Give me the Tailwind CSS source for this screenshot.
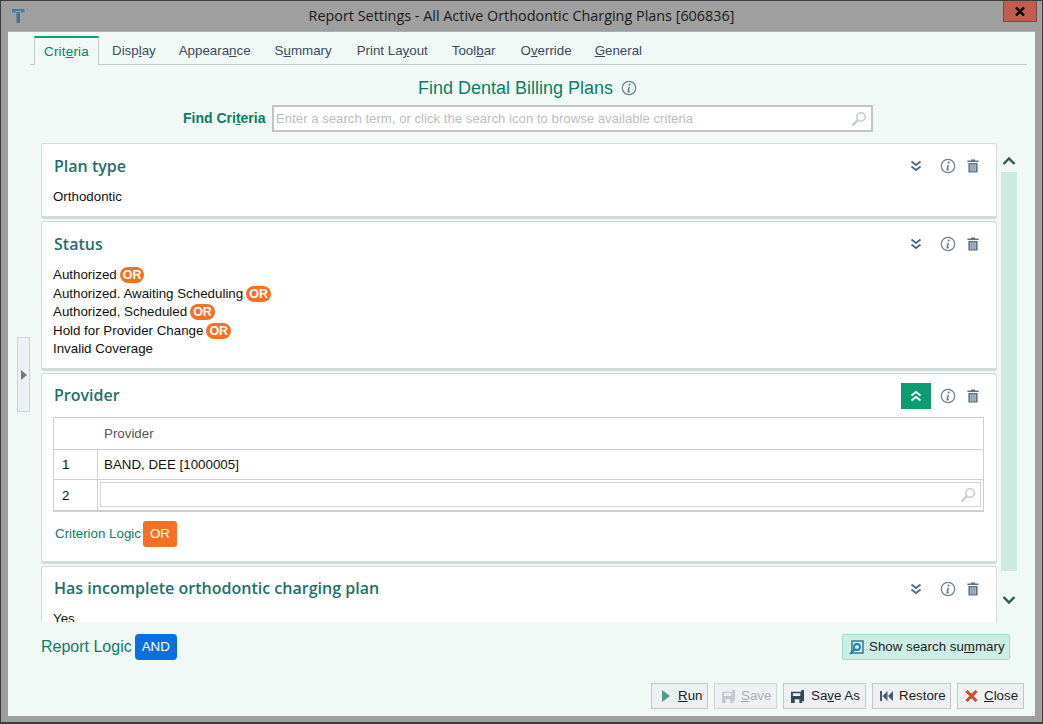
<!DOCTYPE html>
<html lang="en">
<head>
    <meta charset="UTF-8">
    <title>Report Settings</title>
    <script src="https://cdn.jsdelivr.net/npm/@tailwindcss/browser@4"></script>
</head>
<body class="m-0 bg-[#9f9f9f]">
    <svg class="hidden" width="0" height="0">
        <symbol id="chev-down" viewBox="0 0 12 12"><path d="M1.500 1.500 6 5l4.500-3.500M1.500 6.500 6 10l4.500-3.500" fill="none" stroke="#4d6b82" stroke-width="1.800"/></symbol>
        <symbol id="chev-up" viewBox="0 0 12 12"><path d="M1.500 5.500 6 2l4.500 3.500M1.500 10.500 6 7l4.500 3.500" fill="none" stroke="#fff" stroke-width="1.800"/></symbol>
        <symbol id="info" viewBox="0 0 16 16"><circle cx="8" cy="8" r="6.700" fill="none" stroke="#6b8096" stroke-width="1.200"/><circle cx="8.600" cy="4.600" r="1.100" fill="#6b8096"/><path d="M8.200 6.800 7.200 11.600h1.600" fill="none" stroke="#6b8096" stroke-width="1.600"/></symbol>
        <symbol id="trash" viewBox="0 0 12 14"><path d="M4 1.500V.6h4v.9h3.600v1.400H.4V1.500zM1.400 4h9.200v9.600H1.400z" fill="#5f7387"/><path d="M3.900 5.200v7.200M6 5.200v7.200M8.100 5.200v7.200" stroke="#fff" stroke-width=".8"/></symbol>
        <symbol id="search" viewBox="0 0 16 16"><circle cx="10" cy="6" r="4.200" fill="none" stroke="#c6cdd2" stroke-width="1.600"/><path d="M6.800 9.200 1.500 14.500" stroke="#c6cdd2" stroke-width="2.400"/></symbol>
        <symbol id="disk" viewBox="0 0 14 14"><path d="M0 2h11V0h3v12h-2v2H0zM2 3.500v3h8v-3zM4 10v4h5v-4z" fill="currentColor" fill-rule="evenodd"/></symbol>
    </svg>

    <div class="relative flex flex-col w-[1043px] h-[724px] overflow-hidden border border-[#3d3d3d] border-b-[2px] bg-[#9f9f9f] font-['Liberation_Sans',sans-serif] text-[13.33px] text-[#111]">
        <!-- title bar -->
        <div class="relative flex items-center justify-center h-[30px] shrink-0 font-['Open_Sans',sans-serif] text-[14.4px] text-[#1a1a1a]">
            <svg class="absolute left-[11px] top-[7px]" width="13" height="15" viewBox="0 0 13 15"><path d="M4.500 4h3.500v11H4.500z" fill="#4d708c"/><path d="M0 1h12.500v3.500H9.500L8.500 3H4L3 4.500H0z" fill="#2d86ba"/></svg>
            <span>Report Settings - All Active Orthodontic Charging Plans [606836]</span>
            <div class="absolute right-[5px] top-[-1px] flex items-center justify-center w-[34px] h-[22px] bg-[#c25b50] border border-[#7d4a45]">
                <svg width="10" height="9" viewBox="0 0 10 9"><path d="M1 .5 9 8.500M9 .5 1 8.500" stroke="#000" stroke-width="2.400"/></svg>
            </div>
        </div>

        <!-- window body -->
        <div class="relative flex flex-col flex-1 mx-[7px] mb-[6px] bg-[#f0f9f6] border-t border-[#9fb2c4] min-h-0">
            <!-- tabs -->
            <div class="flex h-[29px] ml-[22px] mr-[8px] mt-[4px] pl-[4px] border-b border-[#c9c9c9] shrink-0 text-[13.33px] text-[#3d4a5c]">
                <div class="flex items-center h-[29px] pl-[9px] bg-[#f0f9f6] border-t-2 border-x border-t-[#0f9d76] border-x-[#c9c9c9] text-[#0d7c66] w-[65px] tracking-[0.25px]">Cri<span>t</span><u>e</u>ria</div>
                <div class="flex items-center h-[30px] ml-[13px]">Disp<u>l</u>ay</div>
                <div class="flex items-center h-[30px] ml-[23px]">Appeara<u>n</u>ce</div>
                <div class="flex items-center h-[30px] ml-[24px]">S<u>u</u>mmary</div>
                <div class="flex items-center h-[30px] ml-[25px]">Print La<u>y</u>out</div>
                <div class="flex items-center h-[30px] ml-[24px]">Tool<u>b</u>ar</div>
                <div class="flex items-center h-[30px] ml-[25px]">O<u>v</u>erride</div>
                <div class="flex items-center h-[30px] ml-[23px]"><u>G</u>eneral</div>
            </div>

            <!-- heading -->
            <div class="flex items-center justify-center h-[24px] mt-[11px] ml-[12px] shrink-0 text-[18px] text-[#0d7c66] gap-[8px]">
                <span>Find Dental Billing Plans</span>
                <svg width="16" height="16"><use href="#info"/></svg>
            </div>

            <!-- find criteria -->
            <div class="flex items-center h-[27px] mt-[5px] ml-[175px] shrink-0">
                <span class="w-[89px] font-bold text-[14px] text-[#0d7c66]">Find Cri<u>t</u>eria</span>
                <div class="flex items-center justify-between w-[601px] h-[27px] bg-white border-2 border-[#c4c4c4] pl-[2px] pr-[4px] text-[13.2px] text-[#bdbdbd]">
                    <span>Enter a search term, or click the search icon to browse available criteria</span>
                    <svg width="16" height="16"><use href="#search"/></svg>
                </div>
            </div>

            <!-- criteria list + scrollbar -->
            <div class="relative flex flex-1 min-h-0 mt-[11px] ml-[33px] mr-[18px]">
                <div class="w-[956px] h-[479px] overflow-hidden flex flex-col gap-[2px] shrink-0">
                    <div class="h-[76px] shrink-0 bg-white border border-b-[3px] border-[#d3dbd8] rounded-[3px] pl-[11px] pr-[17px] pt-[10px]">
                        <div class="flex items-center justify-between h-[24px]">
                            <span class="ml-[1px] text-[16px] font-semibold text-[#1f6f6f] font-['Open_Sans',sans-serif]">Plan type</span>
                            <div class="flex items-center">
                                <svg width="12" height="12"><use href="#chev-down"/></svg>
                                <svg class="ml-[18px]" width="16" height="16"><use href="#info"/></svg>
                                <svg class="ml-[11px]" width="12" height="14"><use href="#trash"/></svg>
                            </div>
                        </div>
                        <div class="mt-[10px] leading-[18px]">Orthodontic</div>
                    </div>

                    <div class="h-[150px] shrink-0 bg-white border border-b-[3px] border-[#d3dbd8] rounded-[3px] pl-[11px] pr-[17px] pt-[10px]">
                        <div class="flex items-center justify-between h-[24px]">
                            <span class="ml-[1px] text-[16px] font-semibold text-[#1f6f6f] font-['Open_Sans',sans-serif]">Status</span>
                            <div class="flex items-center">
                                <svg width="12" height="12"><use href="#chev-down"/></svg>
                                <svg class="ml-[18px]" width="16" height="16"><use href="#info"/></svg>
                                <svg class="ml-[11px]" width="12" height="14"><use href="#trash"/></svg>
                            </div>
                        </div>
                        <div class="mt-[10px] leading-[18.500px]">
                            <div class="flex items-center gap-[3px]">Authorized <span class="h-[16px] px-[3px] rounded-full bg-[#f57023] text-white font-bold text-[12.5px] leading-[16px]">OR</span></div>
                            <div class="flex items-center gap-[3px]">Authorized. Awaiting Scheduling <span class="h-[16px] px-[3px] rounded-full bg-[#f57023] text-white font-bold text-[12.5px] leading-[16px]">OR</span></div>
                            <div class="flex items-center gap-[3px]">Authorized, Scheduled <span class="h-[16px] px-[3px] rounded-full bg-[#f57023] text-white font-bold text-[12.5px] leading-[16px]">OR</span></div>
                            <div class="flex items-center gap-[3px]">Hold for Provider Change <span class="h-[16px] px-[3px] rounded-full bg-[#f57023] text-white font-bold text-[12.5px] leading-[16px]">OR</span></div>
                            <div>Invalid Coverage</div>
                        </div>
                    </div>

                    <div class="h-[191px] shrink-0 bg-white border border-b-[3px] border-[#d3dbd8] rounded-[3px] pl-[11px] pr-[12px] pt-[9px]">
                        <div class="flex items-center justify-between h-[26px] pr-[5px]">
                            <span class="ml-[1px] mt-[-2px] text-[16px] font-semibold text-[#1f6f6f] font-['Open_Sans',sans-serif]">Provider</span>
                            <div class="flex items-center">
                                <div class="flex items-center justify-center w-[30px] h-[26px] bg-[#0b9c74]">
                                    <svg width="12" height="12"><use href="#chev-up"/></svg>
                                </div>
                                <svg class="ml-[9px]" width="16" height="16"><use href="#info"/></svg>
                                <svg class="ml-[11px]" width="12" height="14"><use href="#trash"/></svg>
                            </div>
                        </div>
                        <div class="mt-[8px] border border-[#cfcfcf] border-b-[2px] w-[931px]">
                            <div class="flex h-[32px] border-b border-[#cfcfcf]">
                                <div class="w-[44px] border-r border-transparent"></div>
                                <div class="flex items-center pl-[6px] text-[#555]">Provider</div>
                            </div>
                            <div class="flex h-[30px] border-b border-[#cfcfcf]">
                                <div class="flex items-center w-[44px] pl-[8px] pt-[1px] border-r border-[#cfcfcf]">1</div>
                                <div class="flex items-center pl-[6px] pt-[1px]">BAND, DEE [1000005]</div>
                            </div>
                            <div class="flex h-[30px]">
                                <div class="flex items-center w-[44px] pl-[8px] pt-[1px] border-r border-[#cfcfcf]">2</div>
                                <div class="flex items-center justify-end flex-1 mx-[2px] mt-[2px] mb-[3px] border border-[#d4d4d4] pr-[4px]">
                                    <svg width="16" height="16"><use href="#search"/></svg>
                                </div>
                            </div>
                        </div>
                        <div class="flex items-center mt-[9px] gap-[2px]">
                            <span class="text-[#0d7c66] ml-[2px]">Criterion Logic</span>
                            <span class="flex items-center justify-center w-[34px] h-[26px] rounded-[3px] bg-[#f57023] text-white">OR</span>
                        </div>
                    </div>

                    <div class="h-[80px] shrink-0 bg-white border-x border-t border-[#d3dbd8] rounded-[3px] pl-[11px] pr-[17px] pt-[10px]">
                        <div class="flex items-center justify-between h-[24px]">
                            <span class="ml-[1px] mt-[-2px] text-[16.05px] font-semibold text-[#1f6f6f] font-['Open_Sans',sans-serif]">Has incomplete orthodontic charging plan</span>
                            <div class="flex items-center">
                                <svg width="12" height="12"><use href="#chev-down"/></svg>
                                <svg class="ml-[18px]" width="16" height="16"><use href="#info"/></svg>
                                <svg class="ml-[11px]" width="12" height="14"><use href="#trash"/></svg>
                            </div>
                        </div>
                        <div class="mt-[9px] leading-[18px]">Yes</div>
                    </div>
                </div>

                <!-- scrollbar -->
                <div class="flex flex-col items-center w-[16px] ml-[4px] shrink-0">
                    <svg class="mt-[13px] mb-[6px] shrink-0" width="14" height="10" viewBox="0 0 14 10"><path d="M1.500 8 7 2.500 12.500 8" fill="none" stroke="#2f5a4c" stroke-width="2.400"/></svg>
                    <div class="w-full h-[399px] bg-[#cdeae1]"></div>
                    <svg class="mt-[24px] shrink-0" width="14" height="10" viewBox="0 0 14 10"><path d="M1.500 2 7 7.500 12.500 2" fill="none" stroke="#2f5a4c" stroke-width="2.400"/></svg>
                </div>
            </div>

            <!-- sidebar toggle -->
            <div class="absolute left-[9px] top-[305px] flex items-center w-[13px] h-[75px] bg-[#eef1f4] border border-[#cfd3d6] pl-[3px]">
                <svg width="6" height="10" viewBox="0 0 6 10"><path d="M0 0 6 5 0 10z" fill="#777"/></svg>
            </div>

            <!-- logic + summary -->
            <div class="absolute left-[33px] right-[25px] top-[602px] flex items-center justify-between h-[26px]">
                <div class="flex items-center gap-[3px]">
                    <span class="text-[16px] text-[#0d7c66]">Report Logic</span>
                    <span class="flex items-center justify-center w-[42px] h-[26px] rounded-[4px] bg-[#0a6fe0] text-white">AND</span>
                </div>
                <div class="flex items-center w-[168px] h-[26px] bg-[#cdeee6] border border-[#9ddccb] rounded-[2px] pl-[6px] gap-[5px] text-[#222]">
                    <svg width="15" height="15" viewBox="0 0 15 15"><rect x="3" y="1" width="11" height="12" fill="none" stroke="#2e6f8e" stroke-width="1.400"/><circle cx="8" cy="7" r="3" fill="none" stroke="#1f7fb5" stroke-width="1.800"/><path d="M5.500 9.500 1 14" stroke="#1f7fb5" stroke-width="2"/></svg>
                    <span>Show search su<u>m</u>mary</span>
                </div>
            </div>

            <!-- action buttons -->
            <div class="absolute right-[11px] bottom-[7px] flex items-center gap-[6px] text-[#222]">
                <div class="flex items-center w-[57px] h-[26px] bg-[#eef1f4] border border-[#c3c7ca] pl-[10px] gap-[8px]">
                    <svg width="8" height="12" viewBox="0 0 8 12"><path d="M0 0 8 6 0 12z" fill="#4f9c78"/></svg>
                    <span><u>R</u>un</span>
                </div>
                <div class="flex items-center w-[63px] h-[26px] bg-[#eef1f4] border border-[#d2d5d8] pl-[7px] gap-[6px] text-[#a9aeb2]">
                    <svg width="13" height="13" class="text-[#c3c8cc]"><use href="#disk"/></svg>
                    <span><u>S</u>ave</span>
                </div>
                <div class="flex items-center w-[83px] h-[26px] bg-[#eef1f4] border border-[#c3c7ca] pl-[7px] gap-[7px]">
                    <svg width="13" height="13" class="text-[#34485c]"><use href="#disk"/></svg>
                    <span>Sa<u>v</u>e As</span>
                </div>
                <div class="flex items-center w-[79px] h-[26px] bg-[#eef1f4] border border-[#c3c7ca] pl-[7px] gap-[6px]">
                    <svg width="13" height="10" viewBox="0 0 13 10"><path d="M0 0h2v10H0zM7.500 0v10L2.500 5zM13 0v10L8 5z" fill="#46586a"/></svg>
                    <span>Restore</span>
                </div>
                <div class="flex items-center w-[67px] h-[26px] bg-[#eef1f4] border border-[#c3c7ca] pl-[7px] gap-[6px]">
                    <svg width="13" height="12" viewBox="0 0 13 12"><path d="M1.500 1 11.500 11M11.500 1 1.500 11" stroke="#d0492f" stroke-width="3"/></svg>
                    <span><u>C</u>lose</span>
                </div>
            </div>
        </div>
    </div>
</body>
</html>
